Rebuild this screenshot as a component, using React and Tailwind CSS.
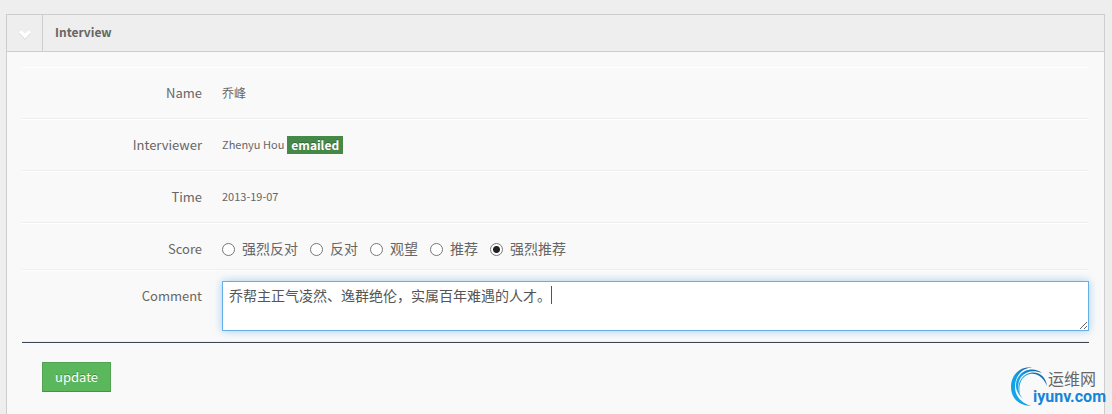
import { useState } from "react";

const scores = ["强烈反对", "反对", "观望", "推荐", "强烈推荐"];

function Row({ children, className }) {
  return (
    <div className={`flex border-t border-b border-t-white border-b-[#eeeeee] ${className}`}>
      {children}
    </div>
  );
}

const labelStyle = "w-[180px] shrink-0 text-right text-[13px] leading-5";

export default function App() {
  const [score, setScore] = useState("强烈推荐");
  return (
    <main className="relative flex min-h-screen flex-col bg-[#eeeeee] pt-3.5 pr-[7px] pl-1.5 font-['Noto_Sans_CJK_SC',sans-serif] text-[#666666]">
      <section className="flex flex-1 flex-col border border-b-0 border-[#cdcdcd] bg-[#f9f9f9]">
        <header className="flex h-[37px] items-center border-b border-[#cdcdcd] bg-[#eeeeee]">
          <button type="button" aria-label="Collapse" className="flex h-full w-9 items-center justify-center border-r border-[#cdcdcd]">
            <svg width="12" height="10" viewBox="0 0 12 10" className="mt-1">
              <path d="M0 3.500 2.200 1.300 6 4.700 9.800 1.300 12 3.500 6 9.800Z" fill="#d8d8d8" />
              <path d="M0 2.500 2.200 0.300 6 3.700 9.800 0.300 12 2.500 6 8.800Z" fill="#ffffff" />
            </svg>
          </button>
          <h1 className="px-3 pb-0.5 text-xs leading-5 font-bold">Interview</h1>
        </header>

        <form className="px-[15px] pt-[15px]" onSubmit={(e) => e.preventDefault()}>
          <Row className="h-[52px] items-center gap-5">
            <div className={labelStyle}>Name</div>
            <div className="text-xs leading-5">乔峰</div>
          </Row>
          <Row className="h-[52px] items-center gap-5">
            <div className={labelStyle}>Interviewer</div>
            <div className="flex items-center gap-[3px] text-[11px] leading-5">
              <span className="pb-0.5">Zhenyu Hou</span>
              <span className="bg-[#468847] px-1 text-xs leading-[18px] font-bold text-white [text-shadow:0_-1px_0_rgba(0,0,0,0.25)]">
                emailed
              </span>
            </div>
          </Row>
          <Row className="h-[52px] items-center gap-5">
            <div className={labelStyle}>Time</div>
            <div className="pb-0.5 text-[11px] leading-5">2013-19-07</div>
          </Row>
          <Row className="h-[47px] items-center gap-5 pt-1">
            <div id="score-label" className={labelStyle}>Score</div>
            <div role="radiogroup" aria-labelledby="score-label" className="flex gap-3">
              {scores.map((s) => (
                <label key={s} className="flex items-center gap-[7px] text-sm leading-5">
                  <input
                    type="radio"
                    name="score"
                    value={s}
                    checked={score === s}
                    onChange={() => setScore(s)}
                    className="mt-px size-[13px] appearance-none rounded-full border border-[#777777] bg-white checked:bg-[radial-gradient(circle,#222222_3px,#ffffff_4px)]"
                  />
                  <span className="pb-0.5">{s}</span>
                </label>
              ))}
            </div>
          </Row>
          <Row className="h-[72px] gap-5 pt-2.5">
            <label htmlFor="comment" className={`${labelStyle} pt-[5px]`}>Comment</label>
            <div className="relative flex-1">
              <textarea
                id="comment"
                defaultValue="乔帮主正气凌然、逸群绝伦，实属百年难遇的人才。"
                className="block h-[50px] w-full resize-y border border-[#66afe9] bg-white px-1.5 py-[3px] text-sm leading-5 text-[#555555] shadow-[0_0_8px_rgba(102,175,233,0.6)] outline-none"
              />
              <span className="absolute top-[5px] left-[329px] h-[18px] w-px bg-[#555555]" />
            </div>
          </Row>
          <div className="border-t border-[#3f4656] px-5 pt-[19px]">
            <button type="submit" className="h-[30px] border border-[#51a351] border-b-[#419641] bg-[#5bb75b] px-3 text-[13px] leading-5 text-white [text-shadow:0_-1px_0_rgba(0,0,0,0.25)]">
              update
            </button>
          </div>
        </form>
      </section>

      <a href="#" className="absolute right-1.5 bottom-0 flex h-12 items-start">
        <svg width="38" height="42" viewBox="0 0 38 42" className="-mr-[15px]">
          <defs>
            <linearGradient id="ring" x1="0" y1="1" x2="1" y2="0">
              <stop offset="0" stopColor="#16a9ec" />
              <stop offset="0.5" stopColor="#10a0e4" />
              <stop offset="1" stopColor="#14508f" />
            </linearGradient>
          </defs>
          <path d="M21 40C9 40 1 32 1 21 1 9 10 0 22 1.500 11 2 5 11 5 21 5 30 11 37 21 40Z" fill="url(#ring)" />
          <path d="M13 33C5 26 4 17 9 10 15 2 26 2 32 7 24 4 16 5 11 11 7 17 7 26 13 33Z" fill="url(#ring)" />
          <path d="M10 28C6 19 11 9 20 7 29 5 36 11 37 20 33 11 27 7 20 8 11 10 8 19 10 28Z" fill="url(#ring)" />
        </svg>
        <span className="flex flex-col pt-0.5">
          <span className="self-end pr-2.5 text-base leading-5 text-[#666666]">运维网</span>
          <span className="font-[Roboto,sans-serif] text-base leading-[18px] font-bold text-[#1585d8]">iyunv.com</span>
        </span>
      </a>
    </main>
  );
}
